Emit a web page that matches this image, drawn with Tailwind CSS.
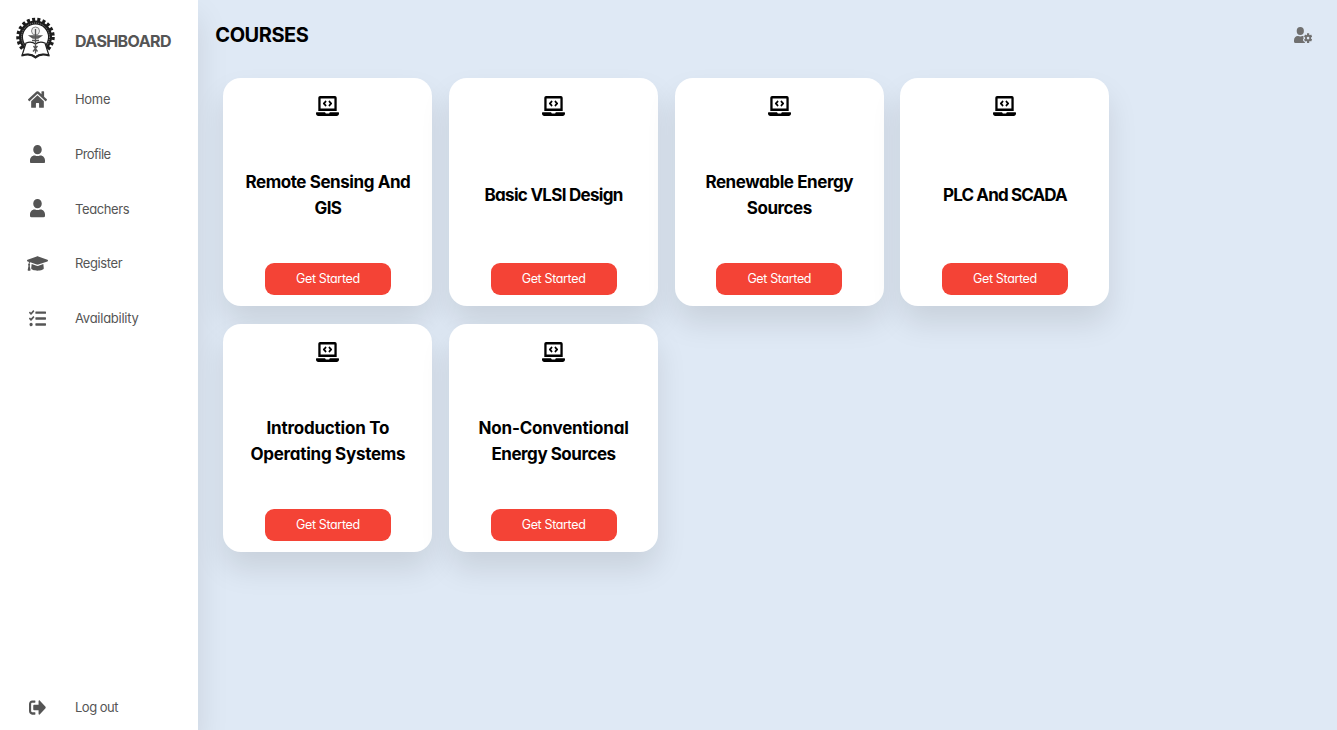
<!DOCTYPE html>
<html lang="en">
<head>
<meta charset="utf-8">
<title>Courses</title>
<script src="https://cdn.jsdelivr.net/npm/@tailwindcss/browser@4"></script>
</head>
<body class="h-[730px] w-[1337px] overflow-hidden bg-[#dfe9f5] text-black font-['Inter',sans-serif] [font-feature-settings:'cv11']">
<svg class="hidden">
  <symbol id="home" viewBox="0 0 576 512" preserveAspectRatio="none"><path d="M280.37 148.26L96 300.11V464a16 16 0 0 0 16 16l112.06-.29a16 16 0 0 0 15.92-16V368a16 16 0 0 1 16-16h64a16 16 0 0 1 16 16v95.64a16 16 0 0 0 16 16.05L464 480a16 16 0 0 0 16-16V300L295.67 148.26a12.19 12.19 0 0 0-15.3 0zM571.6 251.47L488 182.56V44.05a12 12 0 0 0-12-12h-56a12 12 0 0 0-12 12v72.61L318.47 43a48 48 0 0 0-61 0L4.34 251.47a12 12 0 0 0-1.6 16.9l25.5 31A12 12 0 0 0 45.15 301l235.22-193.74a12.19 12.19 0 0 1 15.3 0L530.9 301a12 12 0 0 0 16.9-1.6l25.5-31a12 12 0 0 0-1.7-16.93z"/></symbol>
  <symbol id="user" viewBox="0 0 448 512" preserveAspectRatio="none"><path d="M224 256c70.7 0 128-57.3 128-128S294.7 0 224 0 96 57.3 96 128s57.3 128 128 128zm89.6 32h-16.7c-22.2 10.2-46.9 16-72.9 16s-50.6-5.8-72.9-16h-16.7C60.2 288 0 348.2 0 422.4V464c0 26.5 21.5 48 48 48h352c26.5 0 48-21.5 48-48v-41.6c0-74.2-60.2-134.4-134.4-134.4z"/></symbol>
  <symbol id="cap" viewBox="0 0 640 512" preserveAspectRatio="none"><path d="M622.34 153.2L343.4 67.5c-15.2-4.67-31.6-4.67-46.79 0L17.66 153.2c-23.54 7.23-23.54 38.36 0 45.59l48.63 14.94c-10.67 13.19-17.23 29.28-17.88 46.9C38.78 266.15 32 276.11 32 288c0 10.78 5.68 19.85 13.86 25.65L20.33 428.53C18.11 438.52 25.71 448 35.94 448h56.11c10.24 0 17.84-9.48 15.62-19.47L82.14 313.65C90.32 307.85 96 298.78 96 288c0-11.57-6.47-21.25-15.66-26.87.76-15.02 8.44-28.3 20.69-36.72L296.6 284.5c9.06 2.78 26.44 6.25 46.79 0l278.95-85.7c23.55-7.24 23.55-38.36 0-45.6zM352.79 315.09c-28.53 8.76-52.84 3.92-65.59 0l-145.02-44.55L128 384c0 35.35 85.96 64 192 64s192-28.65 192-64l-14.18-113.47-145.03 44.56z"/></symbol>
  <symbol id="tasks" viewBox="0 0 512 512" preserveAspectRatio="none"><path d="M139.61 35.5a12 12 0 0 0-17 0L58.93 98.81l-22.7-22.12a12 12 0 0 0-17 0L3.53 92.41a12 12 0 0 0 0 17l47.59 47.4a12.78 12.78 0 0 0 17.61 0l15.59-15.62L156.52 69a12.09 12.09 0 0 0 .09-17zm0 159.19a12 12 0 0 0-17 0l-63.68 63.72-22.7-22.1a12 12 0 0 0-17 0L3.53 252a12 12 0 0 0 0 17L51 316.5a12.77 12.77 0 0 0 17.6 0l15.7-15.69 72.2-72.22a12 12 0 0 0 .09-16.9zM64 368c-26.49 0-48.59 21.5-48.59 48S37.53 464 64 464a48 48 0 0 0 0-96zm432 16H208a16 16 0 0 0-16 16v32a16 16 0 0 0 16 16h288a16 16 0 0 0 16-16v-32a16 16 0 0 0-16-16zm0-320H208a16 16 0 0 0-16 16v32a16 16 0 0 0 16 16h288a16 16 0 0 0 16-16V80a16 16 0 0 0-16-16zm0 160H208a16 16 0 0 0-16 16v32a16 16 0 0 0 16 16h288a16 16 0 0 0 16-16v-32a16 16 0 0 0-16-16z"/></symbol>
  <symbol id="logout" viewBox="0 0 512 512" preserveAspectRatio="none"><path d="M497 273L329 441c-15 15-41 4.5-41-17v-96H152c-13.3 0-24-10.7-24-24v-96c0-13.3 10.7-24 24-24h136V88c0-21.4 25.9-32 41-17l168 168c9.3 9.4 9.3 24.6 0 34zM192 436v-40c0-6.6-5.4-12-12-12H96c-17.7 0-32-14.3-32-32V160c0-17.7 14.3-32 32-32h84c6.6 0 12-5.4 12-12V76c0-6.6-5.4-12-12-12H96c-53 0-96 43-96 96v192c0 53 43 96 96 96h84c6.6 0 12-5.4 12-12z"/></symbol>
  <symbol id="laptop" viewBox="0 0 640 512" preserveAspectRatio="none"><path d="M255.03 261.65c6.25 6.25 16.38 6.25 22.63 0l11.31-11.31c6.25-6.25 6.25-16.38 0-22.63L253.25 192l35.71-35.72c6.25-6.25 6.25-16.38 0-22.63l-11.31-11.31c-6.25-6.25-16.38-6.25-22.63 0l-58.34 58.34c-6.25 6.25-6.25 16.38 0 22.63l58.35 58.34zm96.01-11.3l11.31 11.31c6.25 6.25 16.38 6.25 22.63 0l58.34-58.34c6.25-6.25 6.25-16.38 0-22.63l-58.34-58.34c-6.25-6.25-16.38-6.25-22.63 0l-11.31 11.31c-6.25 6.25-6.25 16.38 0 22.63L386.75 192l-35.71 35.72c-6.25 6.25-6.25 16.38 0 22.63zM624 416H381.54c-.74 19.81-14.71 32-32.74 32H288c-18.69 0-33.02-17.47-32.77-32H16c-8.8 0-16 7.2-16 16v16c0 35.2 28.8 64 64 64h512c35.2 0 64-28.8 64-64v-16c0-8.8-7.2-16-16-16zM576 48c0-26.4-21.6-48-48-48H112C85.6 0 64 21.6 64 48v336h512V48zm-64 272H128V64h384v256z"/></symbol>
</svg>
<div class="flex h-full">
  <nav class="flex w-[198px] shrink-0 flex-col bg-white text-[#555] shadow-[0_17px_30px_rgba(0,0,0,0.1)]">
    <a class="flex h-[72px] items-center pl-4 pt-1">
      <svg class="h-[42px] w-[39px]" viewBox="0 0 78 84" preserveAspectRatio="none">
        <circle cx="39" cy="40" r="34.5" fill="none" stroke="#1c1c1c" stroke-width="8" stroke-dasharray="6 4.32"/>
        <circle cx="39" cy="40" r="29" fill="#fff" stroke="#1c1c1c" stroke-width="8"/>
        <circle cx="39" cy="40" r="28" fill="none" stroke="#aaa" stroke-width="1.6" stroke-dasharray="2 2"/>
        <path d="M20 52Q31 48 39 54Q47 48 58 52L66 77Q49 71 39 80Q29 71 12 77Z" fill="#fff" stroke="#222" stroke-width="2.5"/>
        <path d="M12 77Q29 72 39 81Q49 72 66 77" fill="none" stroke="#222" stroke-width="4"/>
        <circle cx="39" cy="28" r="8" fill="#eee" stroke="#888" stroke-width="2"/>
        <path d="M28 38H50L44 42H34ZM39 24V73M35 58L43 69M43 58L34 69M32 47H46" fill="#888" stroke="#555" stroke-width="2.6"/>
      </svg>
      <span class="mt-[5px] pl-5 text-base font-bold tracking-[-0.6px]">DASHBOARD</span>
    </a>
    <a class="flex h-[54.7px] items-center"><span class="flex w-[75px] justify-center"><svg class="h-[19px] w-[19px] fill-current"><use href="#home"/></svg></span><span class="pt-px text-[13px] tracking-[-0.3px]">Home</span></a>
    <a class="flex h-[54.7px] items-center"><span class="flex w-[75px] justify-center"><svg class="h-[18.5px] w-[15px] fill-current"><use href="#user"/></svg></span><span class="pt-[2px] text-[13px] tracking-[-0.57px]">Profile</span></a>
    <a class="flex h-[54.7px] items-center"><span class="flex w-[75px] justify-center"><svg class="h-[18.5px] w-[15px] fill-current"><use href="#user"/></svg></span><span class="pt-[2px] text-[13px] tracking-[-0.4px]">Teachers</span></a>
    <a class="flex h-[54.7px] items-center"><span class="flex w-[75px] justify-center"><svg class="h-[19px] w-[21px] fill-current"><use href="#cap"/></svg></span><span class="pt-px text-[13px] tracking-[-0.38px]">Register</span></a>
    <a class="flex h-[54.7px] items-center"><span class="flex w-[75px] justify-center"><svg class="h-[19px] w-[17px] fill-current"><use href="#tasks"/></svg></span><span class="pt-[2px] text-[13px] tracking-[-0.25px]">Availability</span></a>
    <a class="mt-auto mb-[-2px] flex h-[50px] items-center"><span class="flex w-[75px] justify-center"><svg class="h-[19px] w-[17px] fill-current"><use href="#logout"/></svg></span><span class="pt-[2px] text-[13px] tracking-[-0.5px]">Log out</span></a>
  </nav>
  <main class="flex-1 pl-[17.3px] pr-[25px]">
    <header class="flex h-[70px] items-center justify-between">
      <h1 class="text-xl font-bold tracking-[-0.45px]">COURSES</h1>
      <svg class="h-4 w-[18px] fill-[#707070]" viewBox="0 0 640 512" preserveAspectRatio="none">
        <path d="M224 256A128 128 0 1 0 224 0a128 128 0 1 0 0 256zM134 288C60 288 0 348 0 422v42c0 26 22 48 48 48h350c-12-8-15-20-15-36-45-15-65-50-62-70 3-20 12-32 25-42-13-15-17-35 3-60-12-10-24-16-35-16h-17c-45 21-101 21-146 0z"/>
        <path fill-rule="evenodd" d="M462 200h78v46l28 18 40-22 38 68-39 22v44l39 22-38 68-40-22-28 18v46h-78v-46l-28-18-40 22-38-68 39-22v-44l-39-22 38-68 40 22 28-18zM501 309a45 45 0 1 0 0 90a45 45 0 1 0 0-90z"/>
      </svg>
    </header>
    <section id="grid" class="grid grid-cols-[repeat(4,209px)] gap-x-[16.7px] gap-y-[18px] pl-[8.1px] pt-2"></section>
  </main>
</div>
<template id="card">
  <article class="flex h-[228px] flex-col items-center rounded-[18px] bg-white pt-[18px] pb-[11px] shadow-[0_17px_30px_rgba(0,0,0,0.1)]">
    <svg class="h-5 w-[23px]"><use href="#laptop"/></svg>
    <h2 class="flex flex-1 flex-col items-center justify-center pt-[10px] text-[17px] font-bold leading-[26px]"></h2>
    <button class="h-8 w-[126px] rounded-[9px] bg-[#f44336] text-[12.5px] leading-5 tracking-[-0.36px] text-white">Get Started</button>
  </article>
</template>
<script>
// Each title is a list of lines with the letter spacing of that line.
const courses = [
  [["Remote Sensing And", "tracking-[-0.42px]"], ["GIS", "tracking-[-0.7px]"]],
  [["Basic VLSI Design", "tracking-[-0.72px]"]],
  [["Renewable Energy", "tracking-[-0.42px]"], ["Sources", "tracking-[-0.5px]"]],
  [["PLC And SCADA", "tracking-[-0.85px]"]],
  [["Introduction To", "tracking-[-0.22px]"], ["Operating Systems", "tracking-[-0.27px]"]],
  [["Non-Conventional", "tracking-[-0.18px]"], ["Energy Sources", "tracking-[-0.48px]"]]
];
for (const lines of courses) {
  const card = document.getElementById('card').content.cloneNode(true);
  for (const [text, tracking] of lines) {
    const s = document.createElement('span');
    s.className = tracking;
    s.textContent = text;
    card.querySelector('h2').append(s);
  }
  document.getElementById('grid').append(card);
}
</script>
</body>
</html>
